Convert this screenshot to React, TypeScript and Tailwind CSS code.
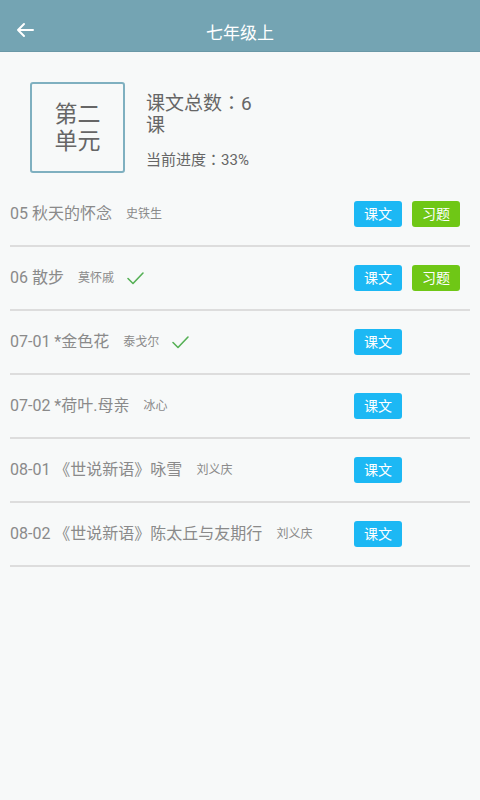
import React from "react";

interface Lesson {
  title: string;
  author: string;
  done?: boolean;
  exercise?: boolean;
}

const lessons: Lesson[] = [
  { title: "05 秋天的怀念", author: "史铁生", exercise: true },
  { title: "06 散步", author: "莫怀戚", done: true, exercise: true },
  { title: "07-01 *金色花", author: "泰戈尔", done: true },
  { title: "07-02 *荷叶.母亲", author: "冰心" },
  { title: "08-01 《世说新语》咏雪", author: "刘义庆" },
  { title: "08-02 《世说新语》陈太丘与友期行", author: "刘义庆" },
];

const font = {
  fontFamily: '"Roboto", "Noto Sans CJK SC", sans-serif',
};

// centred full-width colon
const colon = {
  fontFamily: '"Noto Sans CJK TC", sans-serif',
};

function Check() {
  return (
    <svg width="20" height="16" viewBox="0 0 20 16" className="ml-3">
      <path
        d="M2 8.5 L7 13.5 L17 3"
        fill="none"
        stroke="#55b055"
        strokeWidth="1.6"
        strokeLinecap="round"
        strokeLinejoin="round"
      />
    </svg>
  );
}

function LessonRow({ lesson }: { lesson: Lesson }) {
  return (
    <div className="mx-[10px] h-[64px] flex items-center border-b-2 border-[#dddddd]">
      <div className="flex items-center flex-1 min-w-0">
        <span className="text-[16px] text-[#8a8a8a]">{lesson.title}</span>
        <span className="text-[12px] text-[#8a8a8a] ml-[14px]">
          {lesson.author}
        </span>
        {lesson.done && <Check />}
      </div>
      <div className="flex items-center w-[116px] gap-[10px]">
        <button className="w-[48px] h-[26px] rounded-[3px] bg-[#1cb8f4] text-white text-[14px] leading-none">
          课文
        </button>
        {lesson.exercise && (
          <button className="w-[48px] h-[26px] rounded-[3px] bg-[#6fc716] text-white text-[14px] leading-none">
            习题
          </button>
        )}
      </div>
    </div>
  );
}

export default function App() {
  return (
    <div className="w-[480px] h-[800px] bg-[#f7f9f9] overflow-hidden" style={font}>
      <header className="h-[52px] bg-[#74a4b3] border-b border-[#6a98a7] flex items-center pt-[8px] relative">
        <svg width="18" height="16" viewBox="0 0 18 16" className="ml-[16px]">
          <path
            d="M17 8 H2 M8 2 L2 8 L8 14"
            fill="none"
            stroke="white"
            strokeWidth="2"
            strokeLinecap="round"
            strokeLinejoin="round"
          />
        </svg>
        <h1 className="absolute left-0 right-0 text-center text-white text-[17px] pt-[8px]">
          七年级上
        </h1>
      </header>

      <section className="h-[131px] flex items-start pl-[30px] pt-[30px]">
        <div className="w-[95px] h-[91px] border-2 border-[#7fb0c0] rounded-[3px] flex items-center justify-center">
          <p className="text-[23px] leading-[27px] text-[#666666] text-center">
            第二
            <br />
            单元
          </p>
        </div>
        <div className="ml-[21px] w-[118px] mt-[9px]">
          <p className="text-[19px] leading-[22px] text-[#666666]">
            课文总数<span style={colon}>：</span>6课
          </p>
          <p className="text-[15px] text-[#666666] mt-[11px]">
            当前进度<span style={colon}>：</span>33%
          </p>
        </div>
      </section>

      <div>
        {lessons.map((l) => (
          <LessonRow key={l.title} lesson={l} />
        ))}
      </div>
    </div>
  );
}
